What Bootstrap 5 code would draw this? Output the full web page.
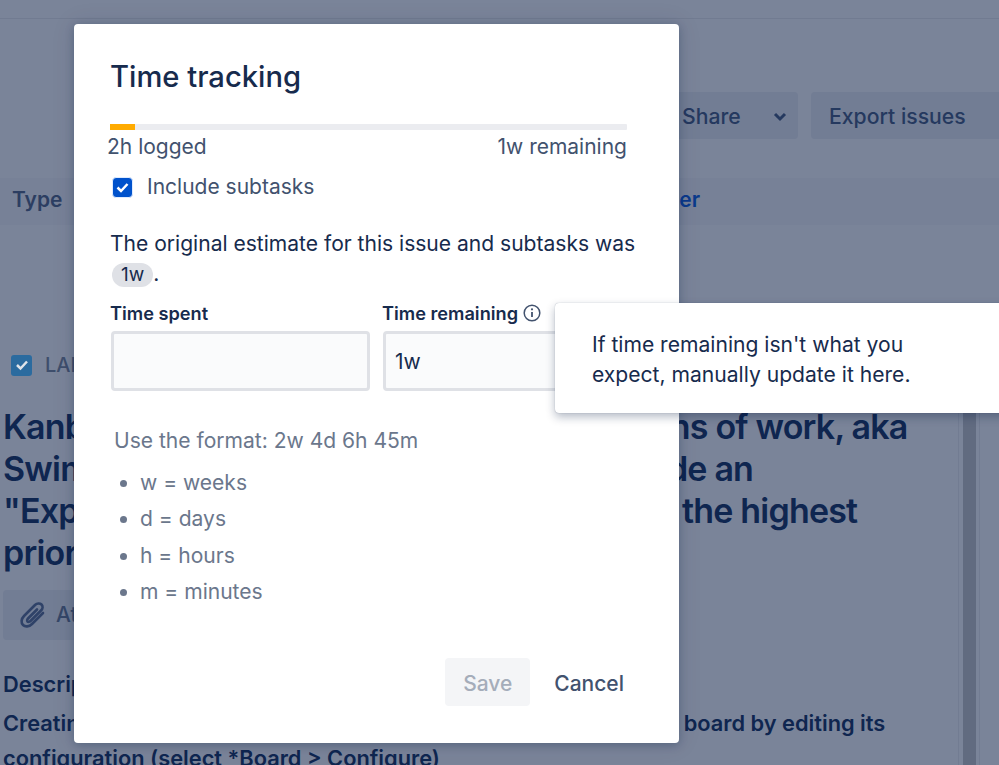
<!DOCTYPE html>
<html lang="en">
<head>
<meta charset="utf-8">
<title>Time tracking</title>
<link href="https://cdn.jsdelivr.net/npm/bootstrap@5.3.0/dist/css/bootstrap.min.css" rel="stylesheet">
<style>
html,body{height:765px;overflow:hidden;}
body{font-family:Inter,"Liberation Sans",sans-serif;background:#7a8499;color:#0f2650;}
.page-back{height:765px;overflow:hidden;position:relative;}
.top-strip{height:19px;border-bottom:1px solid #717b91;}
.tool-row{padding-top:73px;gap:13px;height:159px;justify-content:flex-end;margin-right:-40px;}
.tool-btn{height:47px;background:#727d94;border-radius:4px;color:#25395f;font-size:21.2px;font-weight:500;display:flex;align-items:center;padding-top:3px;}
.share-btn{width:124px;padding-left:8px;justify-content:space-between;padding-right:11px;}
.export-btn{width:228px;padding-left:18px;}
.head-row{height:47px;background:#778197;padding:0 13px 3px 12px;font-size:21px;font-weight:600;color:#2c3e62;display:flex;align-items:center;justify-content:space-between;}
.head-link{color:#0b3a8c;margin-right:286px;}
.lab-row{padding:0 11px;margin-top:121px;height:38px;gap:13px;color:#3e4e6c;font-size:20px;font-weight:500;}
.lab-check{width:21px;height:21px;background:#2b6b9f;border-radius:3px;display:flex;align-items:center;justify-content:center;}
.big-title{font-size:34px;line-height:42px;font-weight:600;letter-spacing:-.8px;margin:22px 0 0 3px;white-space:nowrap;color:#0f2650;}
.attach-box{margin:16px 0 0 3px;width:140px;height:50px;background:#727d94;border-radius:4px;padding-left:15px;gap:8px;font-size:21px;font-weight:500;color:#354768;}
.desc-text{font-size:21.8px;font-weight:600;color:#0f2650;margin:27px 0 0 3px;line-height:35px;white-space:nowrap;}
.desc-head{margin-bottom:4px;}
.split-bar{position:absolute;top:400px;bottom:0;left:958px;width:22px;border-left:1px solid #727c92;border-right:1px solid #727c92;}
.split-bar::after{content:"";display:block;width:13px;height:100%;margin-left:4px;background:#616b80;}
.time-modal{position:absolute;left:74px;top:24px;width:605px;height:719px;background:#fff;border-radius:4px;padding:34px 36px 0;box-shadow:0 2px 8px rgba(9,30,66,.25),0 0 24px rgba(9,30,66,.1);}
.modal-name{font-size:29.2px;line-height:38px;font-weight:500;color:#172b4d;margin:0 0 28px;}
.bar-track{height:6px;background:#ebecf0;border-radius:1px;display:flex;gap:3px;width:517px;}
.bar-done{width:25px;height:6px;background:#ffab00;}
.time-labels{width:520px;margin-left:-3px;font-size:21px;line-height:30px;color:#42526e;margin-top:2px;}
.sub-check{gap:14px;font-size:21px;line-height:30px;color:#42526e;margin-top:10px;margin-left:2px;height:30px;}
.tick-box{width:21px;height:21px;background:#0052cc;border-radius:4px;display:flex;align-items:center;justify-content:center;border:1px solid #deebff;}
.est-text{font-size:21.05px;line-height:30px;color:#172b4d;margin:27px 0 0;width:535px;}
.est-chip{display:inline-block;background:#dfe1e6;border-radius:12px;padding:0 9px;line-height:24px;height:24px;font-size:19px;margin-left:2px;color:#172b4d;}
.fields-row{gap:13px;margin-top:12px;margin-left:1px;width:534px;}
.field-col{width:259px;}
.field-label{font-size:18.2px;font-weight:600;color:#172b4d;line-height:24px;margin-bottom:6px;margin-left:-1px;display:flex;align-items:center;gap:5px;}
.field-box{height:60px;width:259px;background:#fafbfc;border:3px solid #dfe1e6;border-radius:4px;font-size:21px;color:#172b4d;padding:2px 9px 0;display:flex;align-items:center;}
.hint-area{color:#6b778c;font-size:21.05px;margin-top:36px;margin-left:4px;}
.hint-first{line-height:28px;margin-bottom:10px;}
.hint-list{margin:0;padding-left:26px;line-height:36.33px;}
.foot-row{position:absolute;right:55px;bottom:37px;gap:24px;font-size:21px;font-weight:500;}
.save-btn{width:85px;height:48px;background:#f4f5f7;border-radius:4px;color:#a5adba;display:flex;align-items:center;justify-content:center;padding-top:3px;}
.cancel-btn{color:#42526e;padding-top:3px;}
.tip-box{position:absolute;left:555px;top:303px;width:460px;height:110px;background:#fff;border-radius:4px;box-shadow:0 4px 10px rgba(9,30,66,.3),0 0 1px rgba(9,30,66,.4);padding:27px 37px;font-size:21.1px;line-height:30px;color:#172b4d;}
</style>
</head>
<body>
<div class="page-back">
  <div class="top-strip"></div>
  <div class="d-flex tool-row">
    <div class="tool-btn share-btn"><span>Share</span>
      <svg width="14" height="10" viewBox="0 0 14 10"><path d="M2 2l5 5 5-5" fill="none" stroke="#25395f" stroke-width="3"/></svg>
    </div>
    <div class="tool-btn export-btn">Export issues</div>
  </div>
  <div class="head-row"><span>Type</span><span class="head-link">er</span></div>
  <div class="d-flex align-items-center lab-row">
    <span class="lab-check"><svg width="14" height="12" viewBox="0 0 14 12"><path d="M2 6l3.5 3.5L12 2.5" fill="none" stroke="#dfe4ea" stroke-width="2.5"/></svg></span><span>LAB</span>
  </div>
  <div class="big-title">Kanban boards may have horizontal columns of work, aka<br>Swimlanes. These boards will always include an<br>"Expedite" lane for the essential items with the highest<br>priority.</div>
  <div class="d-flex align-items-center attach-box">
    <svg width="30" height="30" viewBox="0 0 30 30"><path d="M25 13L14 24c-3 3-7 3-9 1s-2-6 1-9L17 5c2-2 5-2 6.500-.5S25 8.500 23 10.500L12.500 21c-1 1-2.500 1-3 .5s-.5-2 .5-3l9-9" fill="none" stroke="#2f4268" stroke-width="2.600" stroke-linecap="round"/></svg>
    <span>Attach</span>
  </div>
  <div class="desc-text"><div class="desc-head">Description</div>Creating swimlanes you can add swimlanes of work to a Kanban board by editing its<br>configuration (select *Board &gt; Configure)</div>
  <div class="split-bar"></div>
</div>

<div class="time-modal">
  <h1 class="modal-name">Time tracking</h1>
  <div class="bar-track"><div class="bar-done"></div></div>
  <div class="d-flex justify-content-between time-labels"><span>2h logged</span><span>1w remaining</span></div>
  <div class="d-flex align-items-center sub-check">
    <span class="tick-box"><svg width="13" height="11" viewBox="0 0 13 11"><path d="M1.500 5.500l3.500 3.500 6.500-7" fill="none" stroke="#fff" stroke-width="2.500"/></svg></span>
    <span>Include subtasks</span>
  </div>
  <div class="est-text">The original estimate for this issue and subtasks was <span class="est-chip">1w</span>.</div>
  <div class="d-flex fields-row">
    <div class="field-col">
      <div class="field-label">Time spent</div>
      <div class="field-box"></div>
    </div>
    <div class="field-col">
      <div class="field-label">Time remaining
        <svg width="18" height="18" viewBox="0 0 18 18"><circle cx="9" cy="9" r="7.800" fill="none" stroke="#42526e" stroke-width="1.500"/><path d="M9 8v5" stroke="#42526e" stroke-width="1.800"/><circle cx="9" cy="5.300" r="1.100" fill="#42526e"/></svg>
      </div>
      <div class="field-box">1w</div>
    </div>
  </div>
  <div class="hint-area">
    <div class="hint-first">Use the format: 2w 4d 6h 45m</div>
    <ul class="hint-list">
      <li>w = weeks</li><li>d = days</li><li>h = hours</li><li>m = minutes</li>
    </ul>
  </div>
  <div class="d-flex align-items-center foot-row">
    <div class="save-btn">Save</div>
    <div class="cancel-btn">Cancel</div>
  </div>
</div>
<div class="tip-box">If time remaining isn't what you<br>expect, manually update it here.</div>
<script src="https://cdn.jsdelivr.net/npm/bootstrap@5.3.0/dist/js/bootstrap.bundle.min.js"></script>
</body>
</html>
